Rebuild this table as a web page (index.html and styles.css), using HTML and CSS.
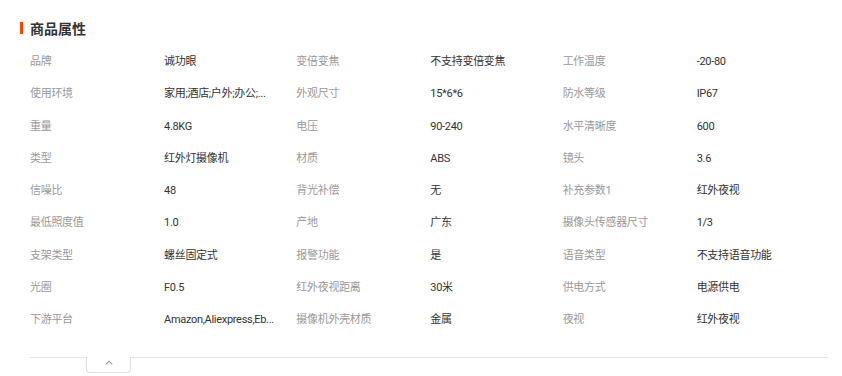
FILE: index.html
```html
<!DOCTYPE html>
<html lang="zh-CN">
<head>
<meta charset="utf-8">
<link rel="stylesheet" href="styles.css">
</head>
<body>
<div class="attrs">
  <h2 class="attrs-title">商品属性</h2>
  <div class="attrs-grid">
    <div class="k">品牌</div><div class="v">诚功眼</div>
    <div class="k">变倍变焦</div><div class="v">不支持变倍变焦</div>
    <div class="k">工作温度</div><div class="v">-20-80</div>

    <div class="k">使用环境</div><div class="v">家用;酒店;户外;办公;...</div>
    <div class="k">外观尺寸</div><div class="v">15*6*6</div>
    <div class="k">防水等级</div><div class="v">IP67</div>

    <div class="k">重量</div><div class="v">4.8KG</div>
    <div class="k">电压</div><div class="v">90-240</div>
    <div class="k">水平清晰度</div><div class="v">600</div>

    <div class="k">类型</div><div class="v">红外灯摄像机</div>
    <div class="k">材质</div><div class="v">ABS</div>
    <div class="k">镜头</div><div class="v">3.6</div>

    <div class="k">信噪比</div><div class="v">48</div>
    <div class="k">背光补偿</div><div class="v">无</div>
    <div class="k">补充参数1</div><div class="v">红外夜视</div>

    <div class="k">最低照度值</div><div class="v">1.0</div>
    <div class="k">产地</div><div class="v">广东</div>
    <div class="k">摄像头传感器尺寸</div><div class="v">1/3</div>

    <div class="k">支架类型</div><div class="v">螺丝固定式</div>
    <div class="k">报警功能</div><div class="v">是</div>
    <div class="k">语音类型</div><div class="v">不支持语音功能</div>

    <div class="k">光圈</div><div class="v">F0.5</div>
    <div class="k">红外夜视距离</div><div class="v">30米</div>
    <div class="k">供电方式</div><div class="v">电源供电</div>

    <div class="k">下游平台</div><div class="v">Amazon,Aliexpress,Eb...</div>
    <div class="k">摄像机外壳材质</div><div class="v">金属</div>
    <div class="k">夜视</div><div class="v">红外夜视</div>
  </div>
  <div class="attrs-foot">
    <button class="fold" type="button" aria-label="收起">
      <svg width="8" height="5" viewBox="0 0 8 5"><path d="M0.8 4.4 L4 1.2 L7.2 4.4" fill="none" stroke="#8a9bb0" stroke-width="1.1"/></svg>
    </button>
  </div>
</div>
</body>
</html>
```
FILE: styles.css
```css
*, *::before, *::after {
  box-sizing: border-box;
}
html, body {
  margin: 0;
  padding: 0;
  background: #fff;
}
body {
  font-family: Roboto, "Noto Sans CJK SC", sans-serif;
  font-size: 11px;
  color: #333;
}
.attrs {
  padding: 19px 14px 0 20px;
}
.attrs-title {
  margin: 0;
  height: 18px;
  line-height: 18px;
  font-size: 14px;
  font-weight: bold;
  color: #333;
  font-family: "Noto Sans CJK SC", sans-serif;
  display: flex;
  align-items: center;
  gap: 7px;
}
.attrs-title::before {
  content: "";
  width: 3px;
  height: 12px;
  background: #ff4400;
}
.attrs-grid {
  margin: 9px 0 0 9px;
  width: 799px;
  display: grid;
  grid-template-columns: 134px 132.33px 134px 132.33px 134px 132.33px;
  grid-auto-rows: 32.25px;
  align-items: center;
}
.k, .v {
  line-height: 16px;
  white-space: nowrap;
  overflow: hidden;
  padding-left: 1px;
  letter-spacing: -0.3px;
}
.k {
  color: #999;
}
.v {
  color: #333;
}
.attrs-foot {
  margin: 21px 0 0 9px;
  width: 799px;
  border-top: 1px solid #e4e4e4;
  padding-left: 57px;
}
.fold {
  display: flex;
  align-items: center;
  justify-content: center;
  width: 45px;
  height: 16px;
  padding: 0 0 5px;
  margin: -1px 0 0;
  background: #fff;
  border: 1px solid #e0e0e0;
  border-top: 0;
  border-radius: 0 0 4px 4px;
}
```
